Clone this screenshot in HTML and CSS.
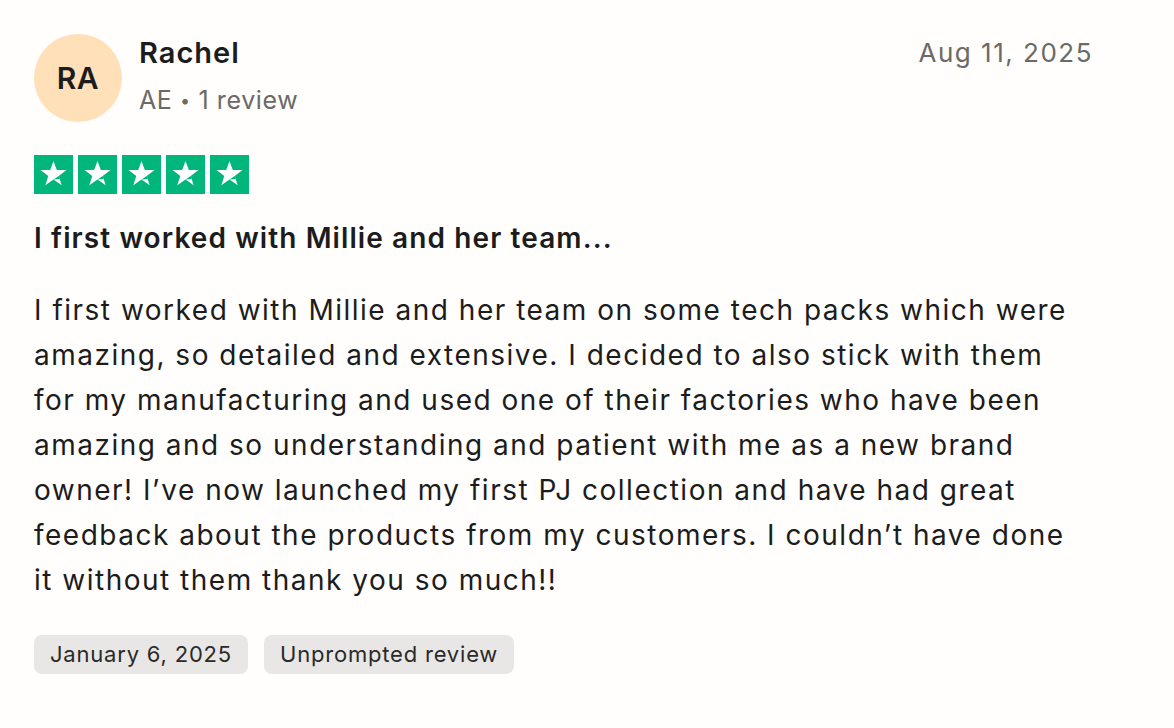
FILE: index.html
```html
<!DOCTYPE html>
<html lang="en">
<head>
    <meta charset="UTF-8">
    <meta name="viewport" content="width=device-width, initial-scale=1.0">
    <title>Review - Rachel</title>
    <link rel="stylesheet" href="styles.css">
</head>
<body>

    <article class="review">
        <div class="review-header">
            <div class="consumer">
                <div class="avatar">RA</div>
                <div class="consumer-info">
                    <div class="consumer-name">Rachel</div>
                    <div class="consumer-meta">AE <span class="dot">•</span> 1 review</div>
                </div>
            </div>
            <time class="review-date">Aug 11, 2025</time>
        </div>

        <!-- 5 star rating -->
        <div class="stars">
            <span class="star"><svg viewBox="0 0 39 39" width="39" height="39"><polygon points="19.5,6 22.8,15.1 32.5,15.1 24.7,20.9 27.7,30.3 19.5,24.6 11.3,30.3 14.3,20.9 6.5,15.1 16.2,15.1" fill="#fff"/><polygon points="24.7,20.9 25.6,23.9 19.5,24.6" fill="#00b67a"/></svg></span>
            <span class="star"><svg viewBox="0 0 39 39" width="39" height="39"><polygon points="19.5,6 22.8,15.1 32.5,15.1 24.7,20.9 27.7,30.3 19.5,24.6 11.3,30.3 14.3,20.9 6.5,15.1 16.2,15.1" fill="#fff"/><polygon points="24.7,20.9 25.6,23.9 19.5,24.6" fill="#00b67a"/></svg></span>
            <span class="star"><svg viewBox="0 0 39 39" width="39" height="39"><polygon points="19.5,6 22.8,15.1 32.5,15.1 24.7,20.9 27.7,30.3 19.5,24.6 11.3,30.3 14.3,20.9 6.5,15.1 16.2,15.1" fill="#fff"/><polygon points="24.7,20.9 25.6,23.9 19.5,24.6" fill="#00b67a"/></svg></span>
            <span class="star"><svg viewBox="0 0 39 39" width="39" height="39"><polygon points="19.5,6 22.8,15.1 32.5,15.1 24.7,20.9 27.7,30.3 19.5,24.6 11.3,30.3 14.3,20.9 6.5,15.1 16.2,15.1" fill="#fff"/><polygon points="24.7,20.9 25.6,23.9 19.5,24.6" fill="#00b67a"/></svg></span>
            <span class="star"><svg viewBox="0 0 39 39" width="39" height="39"><polygon points="19.5,6 22.8,15.1 32.5,15.1 24.7,20.9 27.7,30.3 19.5,24.6 11.3,30.3 14.3,20.9 6.5,15.1 16.2,15.1" fill="#fff"/><polygon points="24.7,20.9 25.6,23.9 19.5,24.6" fill="#00b67a"/></svg></span>
        </div>

        <h2 class="review-title">I first worked with Millie and her team...</h2>

        <p class="review-text">I first worked with Millie and her team on some tech packs which were amazing, so detailed and extensive. I decided to also stick with them for my manufacturing and used one of their factories who have been amazing and so understanding and patient with me as a new brand owner! I’ve now launched my first PJ collection and have had great feedback about the products from my customers. I couldn’t have done it without them thank you so much!!</p>

        <div class="tags">
            <span class="tag">January 6, 2025</span>
            <span class="tag">Unprompted review</span>
        </div>
    </article>

</body>
</html>
```

FILE: styles.css
```css
body {
    margin: 0;
    background-color: #fffefc;
    font-family: 'Inter', 'Noto Sans', sans-serif;
    color: #1c1c1c;
}

.review {
    padding: 34px 81px 40px 34px;
}

.review-header {
    display: flex;
    justify-content: space-between;
    align-items: flex-start;
}

.consumer {
    display: flex;
    gap: 17px;
}

.avatar {
    width: 88px;
    height: 88px;
    border-radius: 50%;
    background-color: #ffe0b8;
    display: flex;
    align-items: center;
    justify-content: center;
    font-size: 30px;
    font-weight: 600;
    letter-spacing: 0.5px;
    color: #1c1c1c;
}

.consumer-name {
    font-size: 29px;
    font-weight: 600;
    line-height: 36px;
    letter-spacing: 1px;
    margin-top: 1px;
}

.consumer-meta {
    font-size: 25px;
    line-height: 36px;
    letter-spacing: 0.6px;
    color: #6b6a67;
    margin-top: 11px;
}

.consumer-meta .dot {
    font-size: 18px;
    vertical-align: 2px;
}

.review-date {
    font-size: 26px;
    line-height: 36px;
    letter-spacing: 1.5px;
    color: #6b6a67;
    margin-top: 1px;
}

.stars {
    display: flex;
    gap: 5px;
    margin-top: 33px;
}

.star {
    display: block;
    width: 39px;
    height: 39px;
    background-color: #00b67a;
}

.star svg {
    display: block;
}

.review-title {
    margin: 26px 0 0;
    font-size: 28px;
    font-weight: 600;
    line-height: 36px;
    letter-spacing: 1.1px;
}

.review-text {
    max-width: 1045px;
    margin: 32px 0 0;
    font-size: 28px;
    line-height: 45px;
    letter-spacing: 1.5px;
}

.tags {
    display: flex;
    gap: 16px;
    margin-top: 32px;
}

.tag {
    display: block;
    height: 39px;
    line-height: 39px;
    padding: 0 16px;
    border-radius: 8px;
    background-color: #e8e7e5;
    font-size: 22px;
    letter-spacing: 0.8px;
    color: #2a2a2a;
}
```
